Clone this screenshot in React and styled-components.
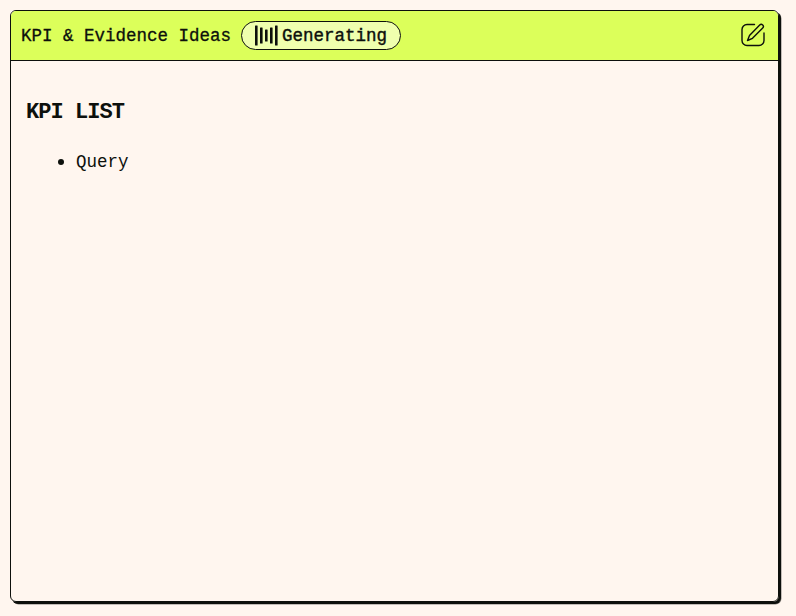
import React from "react";
import styled, { createGlobalStyle } from "styled-components";

const INK = "#0d100c";

const GlobalStyle = createGlobalStyle`
  * { box-sizing: border-box; }
  body {
    margin: 0;
    background: #fff6ef;
    color: ${INK};
    font: 17.5px/24px "Liberation Mono", monospace;
  }
`;

const Page = styled.main`
  height: 616px;
  padding: 10px 17px 14px 10px;
  display: flex;
  overflow: hidden;
`;

const Card = styled.section`
  flex: 1;
  display: flex;
  flex-direction: column;
  border: 1px solid ${INK};
  border-radius: 6px;
  box-shadow: 2px 2px 0 ${INK}, 2.5px 2.5px 0 #0d100c80;
  height: 592px;
  overflow: hidden;
`;

const Header = styled.header`
  height: 50px;
  display: flex;
  align-items: center;
  gap: 10px;
  padding: 0 13px 0 10px;
  background: #dcff5a;
  border-bottom: 1px solid ${INK};
`;

const Title = styled.span`
  width: 210px;
  white-space: nowrap;
  -webkit-text-stroke: 0.3px ${INK};
`;

const Badge = styled.span`
  width: 160px;
  height: 29px;
  display: flex;
  align-items: center;
  gap: 4px;
  padding-left: 13px;
  border: 1px solid ${INK};
  border-radius: 15px;
  background: #efffae;
  -webkit-text-stroke: 0.4px ${INK};
`;

const EditButton = styled.button`
  margin: 0 0 2px auto;
  width: 24px;
  height: 24px;
  padding: 0;
  border: 0;
  background: none;
  color: ${INK};
  svg { display: block; }
`;

const Content = styled.div`
  padding: 38px 15px;
`;

const Heading = styled.h2`
  margin: 0;
  font-size: 22px;
  line-height: 28px;
  font-weight: 700;
  letter-spacing: -0.95px;
`;

const List = styled.ul`
  margin: 23px 0 0;
  padding-left: 50px;
  list-style: none;
`;

const Item = styled.li`
  display: flex;
  align-items: center;
  &::before {
    content: "";
    width: 6px;
    height: 6px;
    margin: 0 12px 1px -18px;
    border-radius: 50%;
    background: ${INK};
  }
`;

const BarsIcon = () => (
  <svg width="23" height="21" viewBox="0 0 23 21" fill={INK}>
    <rect x="0" y="0.5" width="2.6" height="20" rx="0.5" />
    <rect x="5" y="2.5" width="2.6" height="16" rx="0.5" />
    <rect x="10" y="4.5" width="2.6" height="12" rx="0.5" />
    <rect x="15" y="2.5" width="2.6" height="16" rx="0.5" />
    <rect x="20" y="0.5" width="2.6" height="20" rx="0.5" />
  </svg>
);

const EditIcon = () => (
  <svg width="24" height="24" viewBox="0 0 24 24" fill="none" stroke="currentColor" strokeWidth="1.4" strokeLinecap="round" strokeLinejoin="round">
    <path d="M13.5 1.5H6A5 5 0 0 0 1 6.5v11a5 5 0 0 0 5 5h12a5 5 0 0 0 5-5V10" />
    <path d="M6.5 17.5l2-5L18.7 2a2.1 2.1 0 0 1 3 3L11.5 15.3z" />
  </svg>
);

export default function App() {
  return (
    <Page>
      <GlobalStyle />
      <Card>
        <Header>
          <Title>KPI &amp; Evidence Ideas</Title>
          <Badge><BarsIcon />Generating</Badge>
          <EditButton aria-label="Edit"><EditIcon /></EditButton>
        </Header>
        <Content>
          <Heading>KPI LIST</Heading>
          <List><Item>Query</Item></List>
        </Content>
      </Card>
    </Page>
  );
}
